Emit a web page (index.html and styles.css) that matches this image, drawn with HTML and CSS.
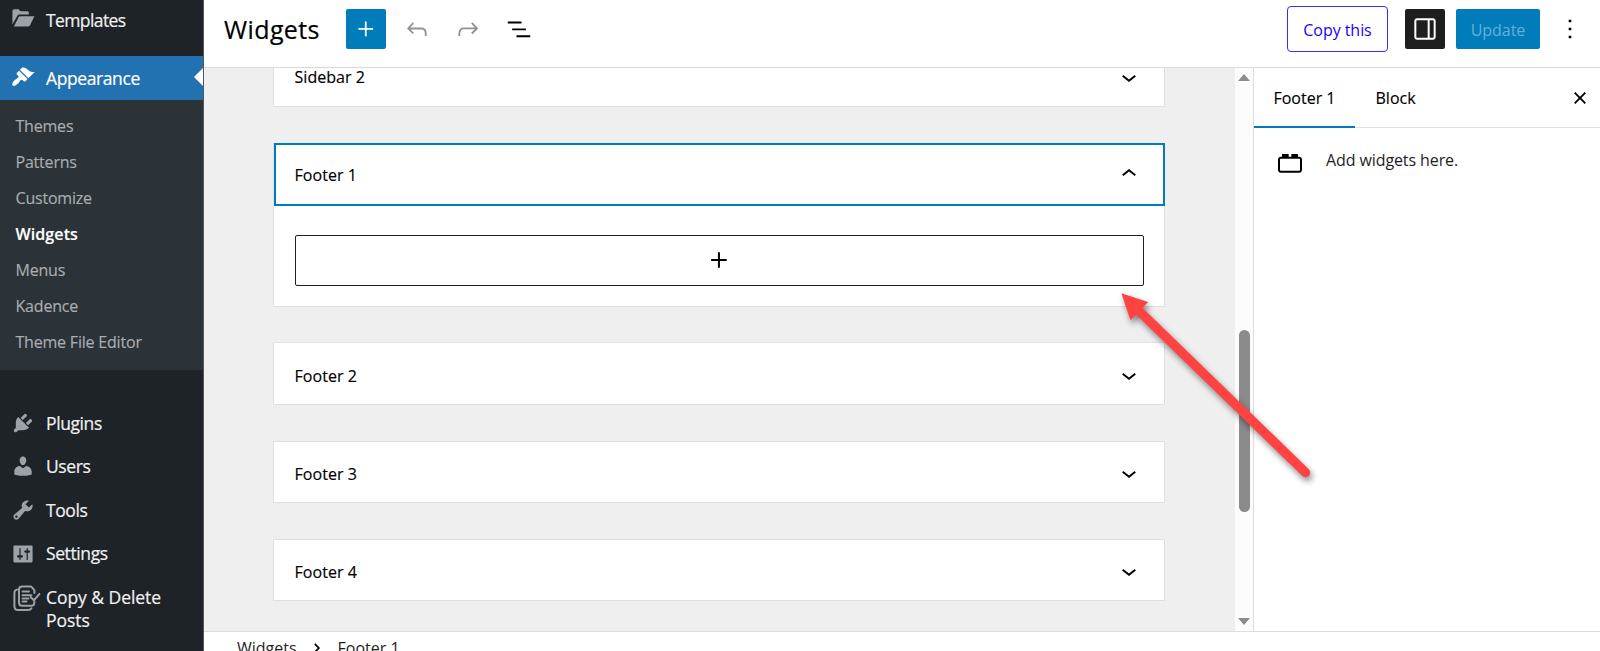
FILE: index.html
```html
<!DOCTYPE html>
<html lang="en">
<head>
    <meta charset="UTF-8">
    <meta name="viewport" content="width=device-width, initial-scale=1.0">
    <title>Widgets</title>
    <link rel="stylesheet" href="styles.css">
</head>
<body>
    <nav class="admin-menu">
        <a class="menu-item menu-templates">
            <svg class="menu-icon" viewBox="0 0 20 20"><path d="M1.2 14.6V3.4c0-.9.6-1.5 1.5-1.5h3.6l1.6 1.7h5.6c.8 0 1.4.5 1.4 1.3v1.3H7.2c-.8 0-1.5.3-1.9 1L1.2 14.6z"/><path d="M2.4 16.2 6.3 8.6c.3-.5.7-.8 1.3-.8h11.9l-3.6 7.4c-.3.6-.8 1-1.5 1z"/></svg>
            <span class="menu-label">Templates</span>
        </a>
        <a class="menu-item menu-current">
            <svg class="menu-icon" viewBox="0 0 20 20"><path d="M14.48 11.06L7.41 3.99l1.5-1.5c.5-.56 2.3-.47 3.51.32 1.21.8 1.43 1.28 2.91 2.1 1.18.64 2.45 1.26 4.45.85zm-.71.71L6.7 4.7 4.93 6.47c-.39.39-.39 1.02 0 1.41l1.06 1.06c.39.39.39 1.03 0 1.42-.6.6-1.43 1.11-2.21 1.69-.35.26-.7.53-1.01.84C1.43 14.23.4 16.08 1.4 17.07c.99 1 2.84-.03 4.18-1.36.31-.31.58-.66.85-1.02.57-.78 1.08-1.61 1.69-2.21.39-.39 1.02-.39 1.41 0l1.06 1.06c.39.39 1.02.39 1.41 0z"/></svg>
            <span class="menu-label">Appearance</span>
        </a>
        <div class="submenu">
            <a>Themes</a>
            <a>Patterns</a>
            <a>Customize</a>
            <a class="active">Widgets</a>
            <a>Menus</a>
            <a>Kadence</a>
            <a>Theme File Editor</a>
        </div>
        <a class="menu-item">
            <svg class="menu-icon" viewBox="0 0 20 20"><path d="M13.11 4.36L9.87 7.6 8 5.73l3.24-3.24c.35-.34 1.05-.2 1.56.32.52.51.66 1.21.31 1.55zm-8 1.77l.91-1.12 9.01 9.01-1.19.84c-.71.71-2.63 1.16-3.82 1.16H6.14L4.9 17.26c-.59.59-1.54.59-2.12 0-.59-.58-.59-1.53 0-2.12l1.24-1.24v-3.88c0-1.13.4-3.19 1.09-3.89zm7.26 3.97l3.24-3.24c.34-.35 1.04-.21 1.55.31.52.51.66 1.21.31 1.55l-3.24 3.25z"/></svg>
            <span class="menu-label">Plugins</span>
        </a>
        <a class="menu-item">
            <svg class="menu-icon" viewBox="0 0 20 20"><path d="M10 9.25c-2.27 0-2.73-3.44-2.73-3.44C7 4.02 7.82 2 9.97 2c2.16 0 2.98 2.02 2.71 3.81 0 0-.41 3.44-2.68 3.44zm0 2.57L12.72 10c2.39 0 4.52 2.33 4.52 4.53v2.49s-3.65 1.13-7.24 1.13c-3.65 0-7.24-1.13-7.24-1.13v-2.49c0-2.25 1.94-4.48 4.47-4.48z"/></svg>
            <span class="menu-label">Users</span>
        </a>
        <a class="menu-item">
            <svg class="menu-icon" viewBox="0 0 20 20"><path d="M16.68 9.77c-1.34 1.34-3.3 1.67-4.95.99l-5.41 6.52c-.99.99-2.59.99-3.58 0s-.99-2.59 0-3.57l6.52-5.42c-.68-1.65-.35-3.61.99-4.95 1.28-1.28 3.12-1.62 4.72-1.06l-2.89 2.89 2.82 2.82 2.86-2.87c.53 1.58.18 3.39-1.08 4.65zM3.81 16.21c.4.39 1.04.39 1.43 0 .4-.4.4-1.04 0-1.43-.39-.4-1.03-.4-1.43 0-.39.39-.39 1.03 0 1.43z"/></svg>
            <span class="menu-label">Tools</span>
        </a>
        <a class="menu-item">
            <svg class="menu-icon" viewBox="0 0 20 20"><path d="M18 16V4c0-.55-.45-1-1-1H3c-.55 0-1 .45-1 1v12c0 .55.45 1 1 1h14c.55 0 1-.45 1-1zM8 11h1c.55 0 1 .45 1 1s-.45 1-1 1H8v1.5c0 .28-.22.5-.5.5s-.5-.22-.5-.5V13H6c-.55 0-1-.45-1-1s.45-1 1-1h1V5.5c0-.28.22-.5.5-.5s.5.22.5.5V11zm5-2h-1c-.55 0-1-.45-1-1s.45-1 1-1h1V5.5c0-.28.22-.5.5-.5s.5.22.5.5V7h1c.55 0 1 .45 1 1s-.45 1-1 1h-1v5.5c0 .28-.22.5-.5.5s-.5-.22-.5-.5V9z"/></svg>
            <span class="menu-label">Settings</span>
        </a>
        <a class="menu-item menu-tall">
            <svg class="copy-icon" viewBox="0 0 28 28" fill="none" stroke="#9ca2a7" stroke-width="2" stroke-linecap="round" stroke-linejoin="round">
                <path d="M21.4 8V5.2L18 1.4H9.2C7.3 1.4 6 2.7 6 4.6v13c0 1.9 1.3 3.2 3.2 3.2h9c1.9 0 3.2-1.3 3.2-3.2v-1"/>
                <path d="M4 4.6C2.4 5 1.4 6.2 1.4 8v13.2c0 2.4 1.5 3.9 3.9 3.9h9.6c1.6 0 2.8-.6 3.5-1.7"/>
                <path d="M9.5 6.5h6.5M9.5 10.2h9M9.5 13.4h6M9.5 16.5h4M17.8 12.3l3 3 5.6-6.3"/>
            </svg>
            <span class="menu-label">Copy &amp; Delete Posts</span>
        </a>
    </nav>

    <div class="editor">
        <header class="editor-header">
            <h1 class="title">Widgets</h1>
            <button class="btn-square btn-add"><svg class="icon" viewBox="0 0 24 24"><path d="M11.1 12.6v5.2h1.4v-5.2h5.2v-1.4h-5.2V6h-1.4v5.2H5.9v1.4z"/></svg></button>
            <div class="tools">
                <svg class="icon muted" viewBox="0 0 24 24"><path d="M18.3 11.7c-.6-.6-1.4-.9-2.3-.9H6.7l2.9-3.3-1.1-1-4.5 5L8.5 16l1-1-2.7-2.7H16c.5 0 .9.2 1.3.5 1 1 1 3.4 1 4.5v.3h1.5v-.2c0-1.5 0-4.3-1.5-5.7z"/></svg>
                <svg class="icon muted" viewBox="0 0 24 24"><path d="M15.6 6.5l-1.1 1 2.9 3.3H8c-.9 0-1.7.3-2.3.9-1.4 1.5-1.4 4.2-1.4 5.6v.2h1.5v-.3c0-1.1 0-3.5 1-4.5.3-.3.7-.5 1.3-.5h9.2L14.5 15l1.1 1.1 4.6-4.6-4.6-5z"/></svg>
                <svg class="icon" viewBox="0 0 24 24"><path d="M3 6h11v1.5H3V6Zm3.5 5.5h11V13h-11v-1.5ZM21 17H10v1.5h11V17Z"/></svg>
            </div>
            <div class="actions">
                <button class="btn-copy">Copy this</button>
                <button class="btn-square btn-panel"><svg class="icon-lg" viewBox="0 0 24 24"><path d="M18 4H6c-1.1 0-2 .9-2 2v12c0 1.1.9 2 2 2h12c1.1 0 2-.9 2-2V6c0-1.1-.9-2-2-2zm-4 14.5H6c-.3 0-.5-.2-.5-.5V6c0-.3.2-.5.5-.5h8v13zm4.5-.5c0 .3-.2.5-.5.5h-2.5v-13H18c.3 0 .5.2.5.5v12z"/></svg></button>
                <button class="btn-update">Update</button>
                <svg class="icon-lg more" viewBox="0 0 24 24"><path d="M13 19h-2v-2h2v2zm0-6h-2v-2h2v2zm0-6h-2V5h2v2z"/></svg>
            </div>
        </header>

        <div class="workspace">
            <main class="canvas">
                <section class="area">
                    <div class="area-head area-cut"><span>Sidebar 2</span><svg class="icon" viewBox="0 0 24 24"><path d="M17.5 11.6L12 16l-5.5-4.4.9-1.2L12 14l4.5-3.6 1 1.2z"/></svg></div>
                </section>
                <section class="area area-open">
                    <div class="area-head focused"><span>Footer 1</span><svg class="icon" viewBox="0 0 24 24"><path d="M6.5 12.4L12 8l5.5 4.4-.9 1.2L12 10l-4.5 3.6-1-1.2z"/></svg></div>
                    <div class="area-body">
                        <button class="appender"><svg class="icon-lg" viewBox="0 0 24 24"><path d="M11.2 12.7v5.1h1.5v-5.1h5.1v-1.5h-5.1V6.1h-1.5v5.1H6.1v1.5z"/></svg></button>
                    </div>
                </section>
                <section class="area">
                    <div class="area-head"><span>Footer 2</span><svg class="icon" viewBox="0 0 24 24"><path d="M17.5 11.6L12 16l-5.5-4.4.9-1.2L12 14l4.5-3.6 1 1.2z"/></svg></div>
                </section>
                <section class="area">
                    <div class="area-head"><span>Footer 3</span><svg class="icon" viewBox="0 0 24 24"><path d="M17.5 11.6L12 16l-5.5-4.4.9-1.2L12 14l4.5-3.6 1 1.2z"/></svg></div>
                </section>
                <section class="area">
                    <div class="area-head"><span>Footer 4</span><svg class="icon" viewBox="0 0 24 24"><path d="M17.5 11.6L12 16l-5.5-4.4.9-1.2L12 14l4.5-3.6 1 1.2z"/></svg></div>
                </section>
            </main>
            <div class="scrollbar">
                <div class="scroll-up"></div>
                <div class="scroll-thumb"></div>
                <div class="scroll-down"></div>
            </div>
            <aside class="inspector">
                <div class="tabs">
                    <button class="tab tab-active">Footer 1</button>
                    <button class="tab">Block</button>
                    <svg class="icon close" viewBox="0 0 24 24"><path d="M12 13.06l3.712 3.713 1.061-1.06L13.061 12l3.712-3.712-1.06-1.06L12 10.938 8.288 7.227l-1.061 1.06L10.939 12l-3.712 3.712 1.06 1.061L12 13.061z"/></svg>
                </div>
                <div class="inspector-body">
                    <svg class="icon-lg" viewBox="0 0 24 24"><path d="M19 8h-1V6h-5v2h-2V6H6v2H5c-1.1 0-2 .9-2 2v8c0 1.1.9 2 2 2h14c1.1 0 2-.9 2-2v-8c0-1.1-.9-2-2-2zm.5 10c0 .3-.2.5-.5.5H5c-.3 0-.5-.2-.5-.5v-8c0-.3.2-.5.5-.5h14c.3 0 .5.2.5.5v8z"/></svg>
                    <p>Add widgets here.</p>
                </div>
            </aside>
        </div>

        <footer class="breadcrumb">
            <span>Widgets</span>
            <svg viewBox="0 0 6 10"><path d="M.8.8 4.8 5 .8 9.2" fill="none" stroke="#000" stroke-width="1.8"/></svg>
            <span>Footer 1</span>
        </footer>
    </div>

    <!-- red pointer arrow -->
    <svg class="pointer" viewBox="0 0 200 200">
        <path d="M23 23 194.5 189.5" stroke="#ff4343" stroke-width="9.4" stroke-linecap="round"/>
        <path d="M10.3 10.3 37.2 19 19.5 37.3z" fill="#ff4343"/>
    </svg>
</body>
</html>
```
FILE: styles.css
```css
* {
    box-sizing: border-box;
}

body {
    display: flex;
    height: 651px;
    margin: 0;
    overflow: hidden;
    background-color: #fff;
    color: #000;
    font-family: "Open Sans", "Noto Sans", sans-serif;
    font-size: 16px;
}

button {
    padding: 0;
    border: none;
    background: none;
    color: inherit;
    font: inherit;
    letter-spacing: inherit;
    white-space: nowrap;
}

svg {
    display: block;
    flex-shrink: 0;
}

.icon {
    width: 30px;
    height: 30px;
}

.icon-lg {
    width: 32px;
    height: 32px;
}

/* admin menu */
.admin-menu {
    width: 204px;
    height: 651px;
    flex-shrink: 0;
    overflow: hidden;
    background-color: #1d2327;
    border-right: 1px solid #50575e;
}

.menu-item {
    display: flex;
    align-items: center;
    height: 43.6px;
    padding-left: 11px;
    color: #f0f0f1;
    font-size: 17.5px;
    letter-spacing: -0.4px;
    line-height: 22.5px;
    -webkit-text-stroke: 0.2px;
}

.menu-icon {
    width: 24px;
    height: 24px;
    margin-right: 11px;
    fill: #9ca2a7;
}

.menu-templates {
    height: 56px;
    padding-bottom: 15px;
    letter-spacing: -0.6px;
}

.menu-templates .menu-icon {
    margin-top: -3px;
}

.menu-current {
    position: relative;
    background-color: #2271b1;
    color: #fff;
}

.menu-current .menu-icon {
    margin-top: -1px;
    fill: #fff;
}

.menu-current::after {
    content: "";
    position: absolute;
    right: -1px;
    top: 11px;
    border: 10.5px solid transparent;
    border-right-color: #fff;
    border-left: none;
}

.submenu {
    height: 270px;
    margin-bottom: 31.5px;
    padding: 9.8px 0 0 15.5px;
    background-color: #2c3338;
    color: #a9adb1;
    font-size: 16px;
    letter-spacing: -0.2px;
    -webkit-text-stroke: 0.15px;
}

.submenu a {
    display: block;
    line-height: 35.9px;
}

.submenu .active {
    color: #fff;
    font-weight: 600;
    letter-spacing: 0.1px;
}

.menu-tall {
    align-items: flex-start;
    height: 60px;
    padding: 11px 20px 0 13px;
    letter-spacing: -0.05px;
}

.copy-icon {
    width: 28px;
    height: 28px;
    margin: -1px 5px 0 0;
}

/* editor */
.editor {
    display: flex;
    flex: 1;
    flex-direction: column;
    min-width: 0;
}

.editor-header {
    display: flex;
    align-items: center;
    height: 68px;
    flex-shrink: 0;
    padding: 0 14px 10px 20px;
    border-bottom: 1px solid #d9d9d9;
}

.title {
    width: 122px;
    margin: 0;
    font-size: 25px;
    font-weight: 500;
    letter-spacing: 0.4px;
    -webkit-text-stroke: 0.2px;
}

.btn-square {
    display: flex;
    align-items: center;
    justify-content: center;
    width: 40px;
    height: 40px;
    border-radius: 2px;
    fill: #fff;
}

.btn-add,
.btn-update {
    background-color: #007cba;
}

.tools {
    display: flex;
    gap: 21px;
    margin-left: 16px;
}

.muted {
    fill: #949494;
}

.actions {
    display: flex;
    align-items: center;
    margin-left: auto;
}

.btn-copy {
    width: 101px;
    height: 46px;
    margin-right: 17px;
    padding-top: 2px;
    border: 1px solid #3a2bff;
    border-radius: 4px;
    color: #1a00ff;
    letter-spacing: -0.05px;
}

.btn-panel {
    background-color: #1e1e1e;
    margin-right: 11px;
}

.btn-update {
    width: 84px;
    height: 40px;
    padding-top: 2px;
    border-radius: 2px;
    color: #66b0d6;
    letter-spacing: -0.05px;
}

.more {
    margin-left: 14px;
}

.workspace {
    display: flex;
    flex: 1;
    min-height: 0;
}

.canvas {
    flex: 1;
    padding: 0 70px 0 69px;
    overflow: hidden;
    background-color: #efefef;
}

.area {
    height: 62.5px;
    margin-bottom: 35.7px;
    border: 1px solid #e0e0e0;
    background-color: #fff;
    font-weight: 500;
    letter-spacing: 0.05px;
    -webkit-text-stroke: 0.15px;
}

.area:first-child {
    margin-top: -23.5px;
}

.area-open {
    height: 164.1px;
}

.area-head {
    display: flex;
    align-items: center;
    justify-content: space-between;
    height: 60.5px;
    padding: 4px 20px 0 20.5px;
}

.area-head .icon {
    margin-top: -2px;
}

.area-cut {
    padding-top: 2px;
}

.area-cut .icon {
    margin-top: 0;
}

.focused {
    height: 63px;
    margin: -1px -1px -1px 0;
    padding: 2px 19px 0 18.5px;
    border: 2px solid #007cba;
}

.area-body {
    padding: 30px 20px 0 20.5px;
}

.appender {
    display: flex;
    align-items: center;
    justify-content: center;
    width: 100%;
    height: 51px;
    border: 1px solid #1e1e1e;
    border-radius: 2px;
}

.scrollbar {
    display: flex;
    flex-direction: column;
    align-items: center;
    width: 19px;
    padding: 6px 0;
    border-right: 1px solid #ddd;
    background-color: #fcfcfc;
}

.scroll-up,
.scroll-down {
    border: 6.5px solid transparent;
}

.scroll-up {
    border-top: none;
    border-bottom: 7px solid #8b8b8b;
}

.scroll-down {
    margin-top: auto;
    border-bottom: none;
    border-top: 7px solid #8b8b8b;
}

.scroll-thumb {
    width: 11px;
    height: 182px;
    margin-top: 249px;
    border-radius: 6px;
    background-color: #8b8b8b;
}

.inspector {
    width: 346px;
    background-color: #fff;
}

.tabs {
    display: flex;
    height: 60px;
    border-bottom: 1px solid #e0e0e0;
}

.tab {
    height: 60px;
    padding: 0 20.5px;
    font-weight: 500;
    letter-spacing: 0;
    -webkit-text-stroke: 0.15px;
}

.tab-active {
    width: 101px;
    border-bottom: 2px solid #007cba;
    padding: 2px 0 0;
}

.close {
    margin: 15px 5px 0 auto;
}

.inspector-body {
    display: flex;
    padding: 18px 20px;
}

.inspector-body p {
    margin: 3px 0 0 20px;
    line-height: 22px;
    color: #1e1e1e;
    letter-spacing: -0.1px;
}

.breadcrumb {
    display: flex;
    align-items: center;
    height: 20px;
    flex-shrink: 0;
    padding: 13px 0 0 33px;
    border-top: 1px solid #ddd;
    color: #1e1e1e;
    letter-spacing: 0;
}

.breadcrumb svg {
    width: 6px;
    height: 10px;
    margin: 0 18px 0 17px;
}

.pointer {
    position: absolute;
    left: 1111px;
    top: 283px;
    width: 200px;
    height: 200px;
    filter: drop-shadow(2px 4px 3px rgba(0, 0, 0, 0.45));
}
```
